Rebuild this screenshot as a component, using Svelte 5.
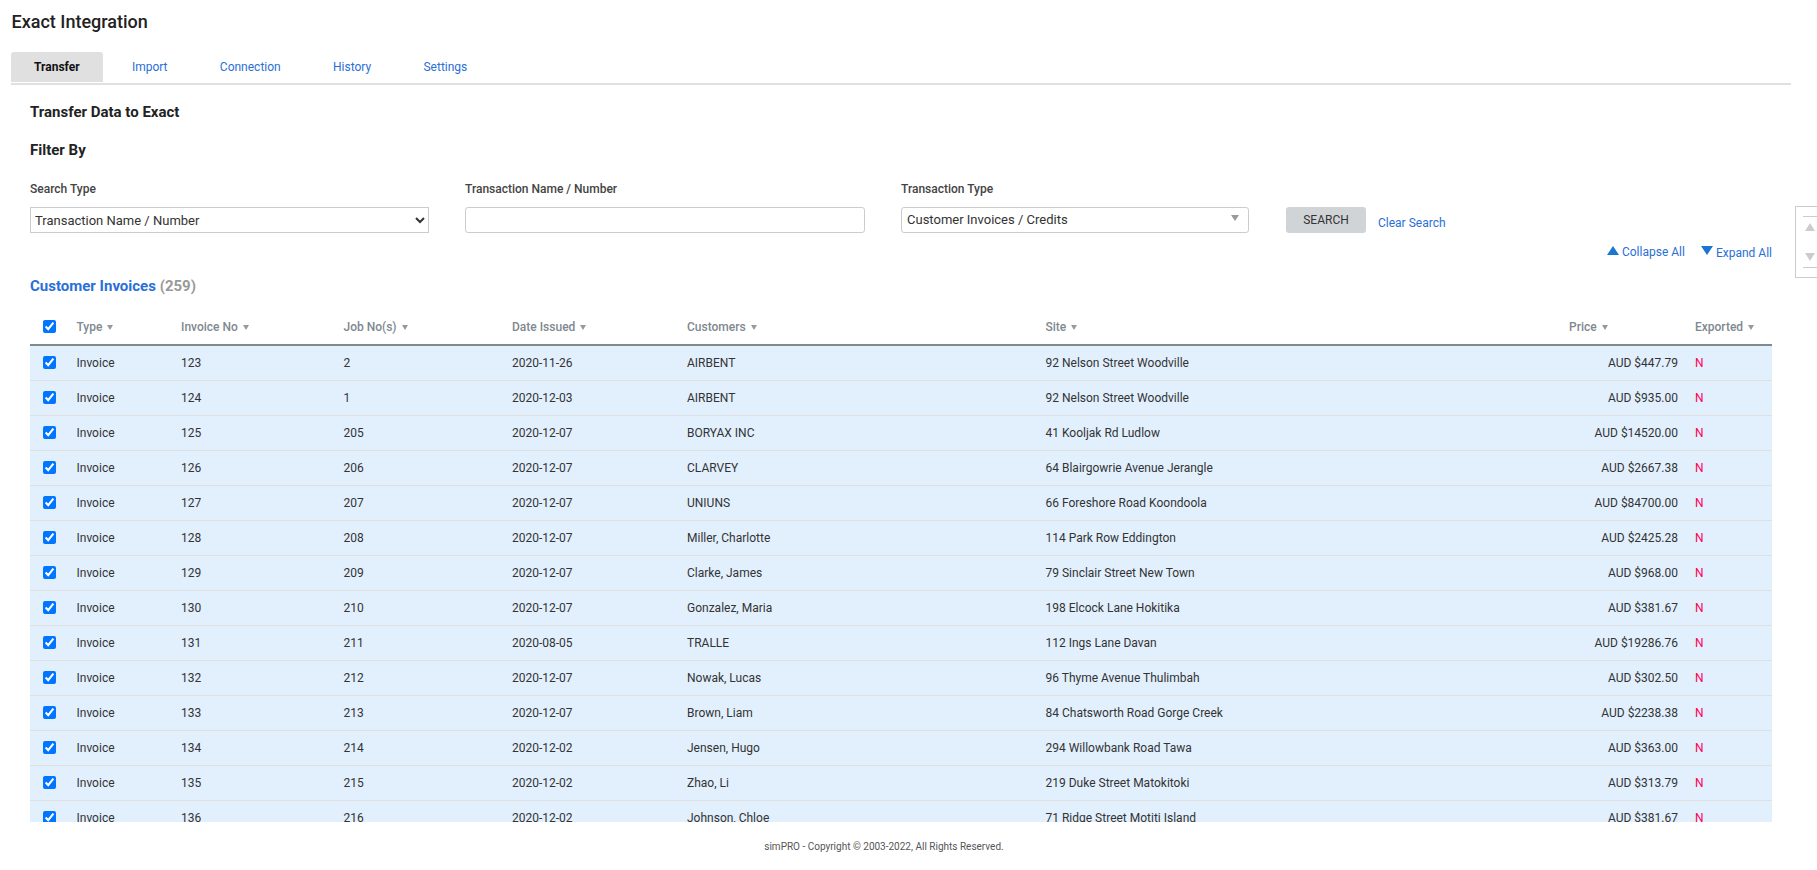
<script>
  const rows = [
    ['123','2','2020-11-26','AIRBENT','92 Nelson Street Woodville','447.79'],
    ['124','1','2020-12-03','AIRBENT','92 Nelson Street Woodville','935.00'],
    ['125','205','2020-12-07','BORYAX INC','41 Kooljak Rd Ludlow','14520.00'],
    ['126','206','2020-12-07','CLARVEY','64 Blairgowrie Avenue Jerangle','2667.38'],
    ['127','207','2020-12-07','UNIUNS','66 Foreshore Road Koondoola','84700.00'],
    ['128','208','2020-12-07','Miller, Charlotte','114 Park Row Eddington','2425.28'],
    ['129','209','2020-12-07','Clarke, James','79 Sinclair Street New Town','968.00'],
    ['130','210','2020-12-07','Gonzalez, Maria','198 Elcock Lane Hokitika','381.67'],
    ['131','211','2020-08-05','TRALLE','112 Ings Lane Davan','19286.76'],
    ['132','212','2020-12-07','Nowak, Lucas','96 Thyme Avenue Thulimbah','302.50'],
    ['133','213','2020-12-07','Brown, Liam','84 Chatsworth Road Gorge Creek','2238.38'],
    ['134','214','2020-12-02','Jensen, Hugo','294 Willowbank Road Tawa','363.00'],
    ['135','215','2020-12-02','Zhao, Li','219 Duke Street Matokitoki','313.79'],
    ['136','216','2020-12-02','Johnson, Chloe','71 Ridge Street Motiti Island','381.67']
  ];
  const heads = ['Type','Invoice No','Job No(s)','Date Issued','Customers','Site','Price','Exported'];
  const tabs = ['Import','Connection','History','Settings'];
</script>

<div class="page">
  <h1>Exact Integration</h1>
  <nav class="tabs">
    <span class="tab active">Transfer</span>
    {#each tabs as t}<a class="tab" href="#top">{t}</a>{/each}
  </nav>
  <main class="content">
    <h2>Transfer Data to Exact</h2>
    <h3>Filter By</h3>
    <div class="filters">
      <label class="field">
        <span>Search Type</span>
        <select class="native"><option>Transaction Name / Number</option></select>
      </label>
      <label class="field second">
        <span>Transaction Name / Number</span>
        <input class="text" type="text" />
      </label>
      <div class="field type">
        <span>Transaction Type</span>
        <div class="fake">Customer Invoices / Credits<i class="caret"></i></div>
      </div>
      <button class="search">SEARCH</button>
      <a class="clear" href="#top">Clear Search</a>
    </div>
    <div class="toggles">
      <a href="#top"><svg class="tri" viewBox="0 0 12 9"><path d="M6 0 12 9H0z"/></svg>Collapse All</a>
      <a href="#top"><svg class="tri" viewBox="0 0 12 9"><path d="M0 0H12L6 9z"/></svg>Expand All</a>
    </div>
    <div class="section">Customer Invoices <span>(259)</span></div>
    <div class="scroll">
      <table>
        <colgroup>
          <col class="c0"/><col class="c1"/><col class="c2"/><col class="c3"/><col class="c4"/><col class="c5"/><col class="c6"/><col class="c7"/><col class="c8"/>
        </colgroup>
        <thead>
          <tr>
            <th class="cb"><input type="checkbox" checked /></th>
            {#each heads as h}<th>{h}<i class="sort"></i></th>{/each}
          </tr>
        </thead>
        <tbody>
          {#each rows as r}
            <tr>
              <td class="cb"><input type="checkbox" checked /></td>
              <td>Invoice</td>
              <td>{r[0]}</td><td>{r[1]}</td><td>{r[2]}</td><td>{r[3]}</td><td>{r[4]}</td>
              <td class="price">AUD ${r[5]}</td>
              <td class="no">N</td>
            </tr>
          {/each}
        </tbody>
      </table>
    </div>
  </main>
  <footer>simPRO - Copyright © 2003-2022, All Rights Reserved.</footer>
  <aside class="widget">
    <div class="inner">
      <svg viewBox="0 0 12 9" preserveAspectRatio="none"><path d="M6 0 12 9H0z"/></svg>
      <svg viewBox="0 0 12 9" preserveAspectRatio="none"><path d="M0 0H12L6 9z"/></svg>
    </div>
  </aside>
</div>

<style>
  :global(body) { margin: 0; background: #fff; }
  .page { position: relative; height: 870px; overflow: hidden; font-family: Roboto, "Liberation Sans", sans-serif; font-size: 12px; color: #333; }
  h1 { margin: 0; padding: 11px 0 0 11.5px; height: 52px; box-sizing: border-box; font-size: 18px; line-height: 22px; font-weight: 500; color: #222; }
  .tabs { display: flex; gap: 5.3px; margin-left: 11px; width: 1780px; height: 31px; border-bottom: 2px solid #e0e0e0; box-sizing: content-box; }
  .tab { height: 30px; line-height: 30px; padding: 0 23.5px; color: #2a6fd6; text-decoration: none; border-radius: 3px 3px 0 0; }
  .tab.active { background: #e0e0e0; color: #111; font-weight: 700; padding: 0 23px; margin-right: 0.5px; }
  .content { padding: 0 45px 0 30px; }
  h2 { margin: 0; padding-top: 19px; font-size: 15px; line-height: 17px; font-weight: 700; color: #222; }
  h3 { margin: 21px 0 0; font-size: 15px; line-height: 17px; font-weight: 700; color: #222; }
  .filters { display: flex; align-items: flex-end; margin-top: 23px; }
  .field { display: flex; flex-direction: column; width: 399px; margin-right: 36px; }
  .field.second { width: 399.5px; margin-right: 36.5px; }
  .field.type { width: 348px; margin-right: 37px; }
  .field span { font-weight: 500; line-height: 14px; color: #444; margin-bottom: 11px; }
  .native, .text, .fake { height: 26px; box-sizing: border-box; border: 1px solid #ccc; background: #fff; font: 13px Roboto, sans-serif; color: #333; }
  .native { width: 399px; padding-left: 0; border-radius: 0; }
  .text { width: 100%; border-radius: 3px; }
  .fake { position: relative; border-radius: 3px; line-height: 23px; padding-left: 5px; }
  .caret { position: absolute; right: 9px; top: 7px; border: 4px solid transparent; border-top: 6px solid #999; border-bottom: 0; }
  .search { width: 80px; height: 26px; border: 0; border-radius: 3px; background: #d1d4d7; color: #333; font: 12px Roboto, sans-serif; }
  .clear { margin-left: 12px; color: #2a6fd6; text-decoration: none; line-height: 14px; margin-bottom: 3px; }
  .toggles { display: flex; justify-content: flex-end; gap: 16px; margin-top: 12px; height: 14px; }
  .toggles a { color: #2a6fd6; text-decoration: none; line-height: 14px; display: flex; align-items: flex-start; gap: 3px; }
  .toggles a:last-child { line-height: 16px; }
  .tri { width: 12px; height: 9px; margin-top: 1px; fill: #1976d2; }
  .section { margin-top: 19px; font-size: 15px; line-height: 17px; font-weight: 700; color: #2a6fd6; }
  .section span { color: #999; }
  .scroll { margin-top: 15px; height: 512px; overflow: hidden; }
  table { width: 1742px; table-layout: fixed; border-collapse: collapse; }
  .c0 { width: 46.5px; } .c1 { width: 104.5px; } .c2 { width: 162.5px; } .c3 { width: 168.5px; }
  .c4 { width: 175px; } .c5 { width: 358.5px; } .c6 { width: 523.5px; } .c7 { width: 126px; } .c8 { width: 77px; }
  th { height: 34px; padding: 0; text-align: left; font-weight: 500; color: #808890; border-bottom: 2px solid #808890; }
  td { height: 34px; padding: 0; background: #e2f0fe; border-bottom: 1px solid #e0e0e0; color: #333; }
  .cb { padding-left: 13px; }
  .cb input { display: block; margin: -1px 0 0; width: 13px; height: 13px; }
  .sort { display: inline-block; margin-left: 5px; vertical-align: 1px; border: 3px solid transparent; border-top: 5px solid #999; border-bottom: 0; }
  .price { text-align: right; padding-right: 17px; }
  .no { color: #ff0050; }
  footer { margin-top: 18px; padding-right: 49px; text-align: center; font-size: 10px; line-height: 14px; color: #555; }
  .widget { position: absolute; left: 1795px; top: 206px; width: 30px; height: 70px; border: 1px solid #ccc; box-sizing: content-box; }
  .inner { position: absolute; left: 7px; right: 0; top: 9px; bottom: 9px; border-top: 1px solid #ccc; border-bottom: 1px solid #ccc; }
  .inner svg { position: absolute; left: 2px; width: 10px; height: 8px; fill: #ccc; }
  .inner svg:first-child { top: 6px; }
  .inner svg:last-child { bottom: 6px; }
</style>
